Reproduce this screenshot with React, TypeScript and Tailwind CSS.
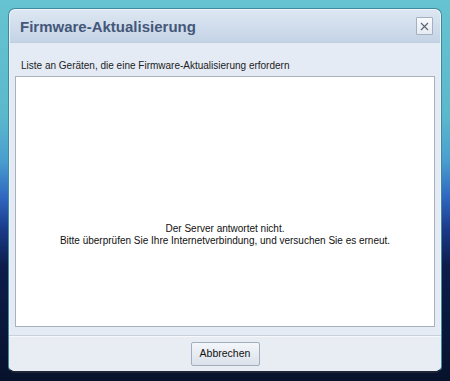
import React from "react";

export default function App() {
  return (
    <div
      className="w-[450px] h-[381px] overflow-hidden flex p-[8px] bg-[linear-gradient(to_bottom,#66c3d0_0%,#5bb9cc_30%,#4a9fcf_42%,#2f66bf_52%,#1b3b8a_60%,#0c1d4a_70%,#07122c_100%)]"
      style={{ fontFamily: '"Liberation Sans", Arial, sans-serif' }}
    >
      <div className="flex-1 flex flex-col rounded-[7px] border border-[#3f8a9e] border-b-[#1c2436] border-b-2 overflow-hidden bg-[#e5ebf5] shadow-[inset_0_0_0_1px_#eef3f9]">
        {/* Title bar */}
        <div className="h-[33px] shrink-0 flex items-center justify-between pl-[10px] pr-[7px] bg-[linear-gradient(to_bottom,#dde7f2,#c4d3e6)] border-b border-[#c0cfe0] mx-[1px] mt-[1px] rounded-t-[6px]">
          <span className="text-[15px] font-bold text-[#445779] leading-none">Firmware-Aktualisierung</span>
          <div className="w-[17px] h-[18px] flex items-center justify-center bg-[linear-gradient(to_bottom,#f8fafd,#e6ebf2)] border border-[#a3b0c0] rounded-[1px]">
            <svg width="9" height="9" viewBox="0 0 9 9">
              <path d="M1 1 L8 8 M8 1 L1 8" stroke="#5a6270" strokeWidth="1.1" />
            </svg>
          </div>
        </div>
        {/* Body */}
        <div className="flex-1 flex flex-col px-[6px]">
          <div className="pt-[17px] pb-[4px] pl-[6px] text-[10px] leading-[12px] text-[#222]">
            Liste an Geräten, die eine Firmware-Aktualisierung erfordern
          </div>
          <div className="h-[251px] bg-white border border-[#a9b1bd] flex flex-col items-center pt-[146px] text-[10px] leading-[11.5px] text-[#111] text-center">
            <div>Der Server antwortet nicht.</div>
            <div>Bitte überprüfen Sie Ihre Internetverbindung, und versuchen Sie es erneut.</div>
          </div>
          <div className="flex-1" />
        </div>
        {/* Footer */}
        <div className="h-[36px] shrink-0 border-t border-[#c9d1dd] bg-[#e8edf4] flex items-center justify-center shadow-[inset_0_1px_0_#f6f8fb]">
          <button className="w-[69px] h-[24px] rounded-[2px] border border-[#a3adbb] bg-[linear-gradient(to_bottom,#f3f6fa,#dbe2ec)] text-[10.5px] text-[#111]">
            Abbrechen
          </button>
        </div>
      </div>
    </div>
  );
}
